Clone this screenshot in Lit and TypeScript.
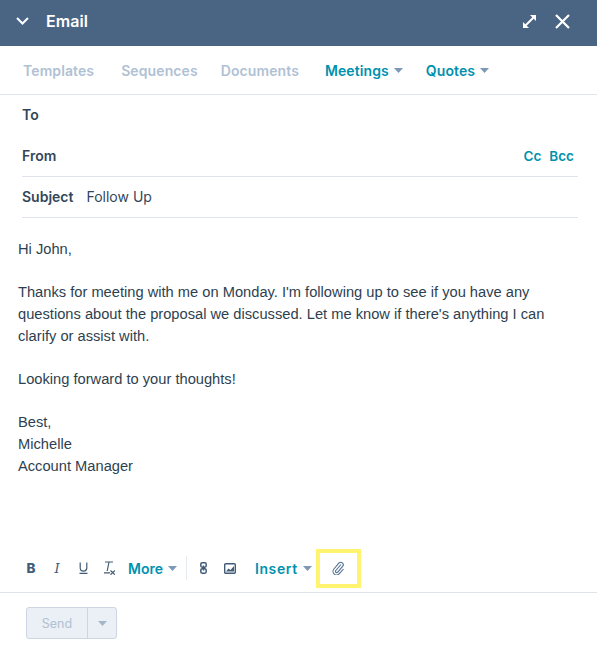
import {LitElement, html, css} from 'lit';
import {customElement} from 'lit/decorators.js';

const caret = html`<svg class="caret" width="9" height="5" viewBox="0 0 9 5"><path d="M0 0h9L4.5 5z" fill="currentColor"></path></svg>`;

@customElement('app-root')
export class AppRoot extends LitElement {
  static styles = css`
    :host {
      display: block;
      width: 597px;
      height: 651px;
      overflow: hidden;
      background: #fff;
      font-family: 'Inter', 'Noto Sans', sans-serif;
      color: #33475b;
    }
    .header {
      height: 46px;
      background: #4a6484;
      color: #fff;
      display: flex;
      align-items: center;
      padding: 0 27px 4px 16px;
      box-sizing: border-box;
    }
    .title {
      margin-left: 17px;
      font-size: 16px;
      font-weight: 600;
      letter-spacing: 0.1px;
      flex: 1;
    }
    .expand {
      margin-right: 18px;
    }
    .tabs {
      height: 49px;
      box-sizing: border-box;
      border-bottom: 1px solid #dfe3eb;
      display: flex;
      align-items: center;
      padding: 0 0 0 23px;
      font-size: 14px;
      font-weight: 600;
      letter-spacing: 0.1px;
    }
    .tab {
      color: #b0c1d4;
      margin-right: 26px;
    }
    .tab:nth-child(1) {
      margin-right: 27px;
    }
    .tab:nth-child(2) {
      margin-right: 23px;
    }
    .tab.active {
      color: #0091ae;
      display: flex;
      align-items: center;
      gap: 5px;
      margin-right: 23px;
    }
    .caret {
      color: #7c98b6;
      flex: none;
    }
    .fields {
      padding: 0 19px 0 22px;
      font-size: 14px;
    }
    .field {
      height: 41px;
      display: flex;
      align-items: center;
      box-sizing: border-box;
      font-weight: 600;
    }
    .field.first {
      padding-bottom: 2px;
    }
    .field.line {
      border-bottom: 1px solid #dfe3eb;
      padding-bottom: 1px;
    }
    .spacer {
      flex: 1;
    }
    .cc {
      color: #0091ae;
      font-size: 13.5px;
      display: flex;
      gap: 8px;
      padding-right: 4px;
    }
    .value {
      font-weight: 400;
      margin-left: 13px;
    }
    .body {
      padding: 21px 18px 0;
      height: 321px;
      box-sizing: border-box;
      font-family: 'Liberation Sans', Arial, sans-serif;
      font-size: 14.68px;
      line-height: 21.8px;
      color: #2e3f50;
    }
    .body p {
      margin: 0 0 21.4px;
    }
    .toolbar {
      height: 54px;
      box-sizing: border-box;
      border-bottom: 1px solid #dfe3eb;
      display: flex;
      align-items: center;
      padding: 5px 0 0 25px;
    }
    .tool {
      width: 12px;
      height: 16px;
      margin-right: 14px;
      display: flex;
      align-items: center;
      justify-content: center;
      flex: none;
      color: #425b76;
    }
    .tool svg {
      flex: none;
    }
    .tool.bold {
      font-size: 13.5px;
      font-weight: 800;
    }
    .tool.italic {
      font-family: 'DejaVu Serif', serif;
      font-style: italic;
      font-size: 13px;
    }
    .tool.clear {
      margin-right: 13px;
    }
    .tool.link {
      margin-right: 14px;
    }
    .tool.image {
      margin-right: 19px;
    }
    .more {
      color: #0091ae;
      font-size: 14px;
      font-weight: 600;
      display: flex;
      align-items: center;
      gap: 5px;
    }
    .more.insert {
      letter-spacing: 0.6px;
    }
    .sep {
      width: 1px;
      height: 24px;
      background: #e5eaf0;
      margin: 0 11px 0 9px;
    }
    .clip-box {
      width: 45px;
      height: 39px;
      box-sizing: border-box;
      border: 4px solid #fff370;
      margin-left: 4px;
      display: flex;
      align-items: center;
      justify-content: center;
    }
    .footer {
      padding: 14px 26px;
    }
    .send {
      width: 91px;
      height: 32px;
      box-sizing: border-box;
      display: flex;
      background: #eaf0f6;
      border: 1px solid #cbd6e2;
      border-radius: 3px;
      color: #b0c1d4;
      font-size: 12.5px;
      align-items: stretch;
    }
    .send-label {
      width: 60px;
      display: flex;
      align-items: center;
      justify-content: center;
    }
    .send-menu {
      flex: 1;
      border-left: 1px solid #cbd6e2;
      display: flex;
      align-items: center;
      justify-content: center;
    }
    .send-menu .caret {
      color: #a5b6c9;
    }
  `;

  render() {
    return html`
      <div class="header">
        <svg width="13" height="8" viewBox="0 0 13 8" fill="none" stroke="#fff" stroke-width="2"><path d="M1 1l5.500 5.500L12 1"></path></svg>
        <div class="title">Email</div>
        <svg class="expand" width="15" height="15" viewBox="0 0 15 15" fill="none" stroke="#fff" stroke-width="2">
          <path d="M3 12L12 3"></path>
          <path d="M8 1h6v6z" fill="#fff" stroke="none"></path>
          <path d="M1 8v6h6z" fill="#fff" stroke="none"></path>
        </svg>
        <svg width="15" height="15" viewBox="0 0 15 15" fill="none" stroke="#fff" stroke-width="2.200"><path d="M1 1l13 13M14 1L1 14"></path></svg>
      </div>
      <div class="tabs">
        <span class="tab">Templates</span>
        <span class="tab">Sequences</span>
        <span class="tab">Documents</span>
        <span class="tab active">Meetings ${caret}</span>
        <span class="tab active">Quotes ${caret}</span>
      </div>
      <div class="fields">
        <div class="field first">To</div>
        <div class="field line">From<span class="spacer"></span><span class="cc"><span>Cc</span><span>Bcc</span></span></div>
        <div class="field line">Subject<span class="value">Follow Up</span></div>
      </div>
      <div class="body">
        <p>Hi John,</p>
        <p>Thanks for meeting with me on Monday. I'm following up to see if you have any questions about the proposal we discussed. Let me know if there's anything I can clarify or assist with.</p>
        <p>Looking forward to your thoughts!</p>
        <p>Best,<br />Michelle<br />Account Manager</p>
      </div>
      <div class="toolbar">
        <span class="tool bold">B</span>
        <span class="tool italic">I</span>
        <span class="tool">
          <svg width="9" height="12" viewBox="0 0 9 12" fill="none" stroke="#425b76" stroke-width="1.200"><path d="M1.200 0.500v5.300a3.300 3.300 0 0 0 6.600 0V0.500M0.500 11.300h8"></path></svg>
        </span>
        <span class="tool clear">
          <svg width="11" height="14" viewBox="0 0 11 14" fill="none" stroke="#425b76" stroke-width="1.200"><path d="M1 1h8M5 1L3.200 10M0 11.800h6M6.500 9.500l4.500 4.200M11 9.500l-4.500 4.200"></path></svg>
        </span>
        <span class="more">More ${caret}</span>
        <span class="sep"></span>
        <span class="tool link">
          <svg width="7" height="12" viewBox="0 0 7 12" fill="none" stroke="#425b76" stroke-width="1.500"><rect x="0.800" y="0.800" width="5.400" height="4.400" rx="1.400"></rect><rect x="0.800" y="6.800" width="5.400" height="4.400" rx="1.400"></rect><path d="M3.500 3.500v5"></path></svg>
        </span>
        <span class="tool image">
          <svg width="12" height="11" viewBox="0 0 12 11"><rect x="0.700" y="0.700" width="10.600" height="9.600" rx="1" fill="none" stroke="#425b76" stroke-width="1.400"></rect><path d="M2 8.500l2.500-3 2 1.500L10 3v5.500z" fill="#425b76"></path></svg>
        </span>
        <span class="more insert">Insert ${caret}</span>
        <span class="clip-box">
          <svg width="13" height="14" viewBox="0 0 13 14" fill="none" stroke="#516f90" stroke-width="1.100"><path d="M9 3.500L3.800 9.500a1.300 1.300 0 0 0 2 1.700l5-6a2.500 2.500 0 0 0-3.800-3.200L1.900 8a3.600 3.600 0 0 0 5.500 4.700L11.500 8"></path></svg>
        </span>
      </div>
      <div class="footer">
        <div class="send">
          <span class="send-label">Send</span>
          <span class="send-menu">${caret}</span>
        </div>
      </div>
    `;
  }
}
